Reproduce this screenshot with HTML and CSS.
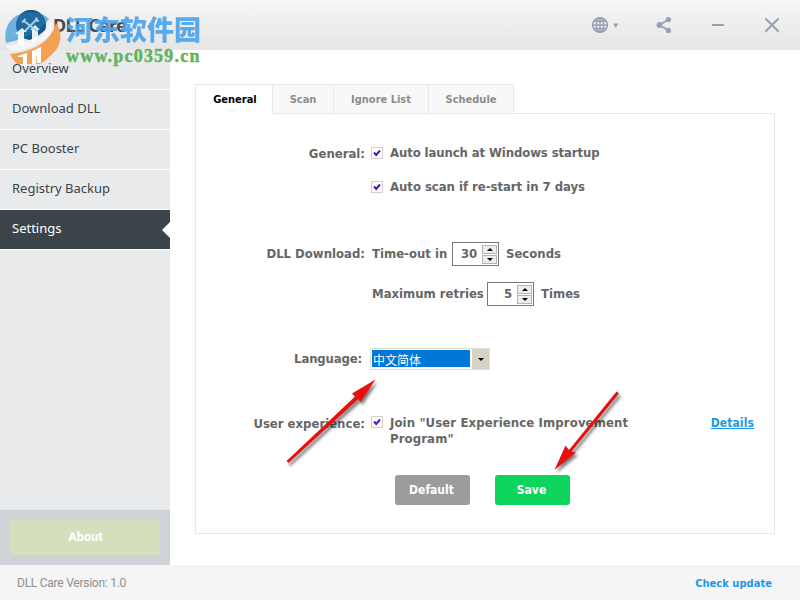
FILE: index.html
```html
<!DOCTYPE html>
<html lang="en">
<head>
  <meta charset="utf-8">
  <title>DLL Care</title>
  <link rel="stylesheet" href="styles.css">
</head>
<body>
  <div class="window">
    <header class="titlebar">
      <svg class="logo" width="30" height="30" viewBox="0 0 30 30">
        <circle cx="15" cy="15" r="15" fill="#1c5580"/>
      </svg>
      <h1 class="app-name">DLL Care</h1>
      <div class="tools">
        <svg class="globe" width="28" height="18" viewBox="0 0 28 18">
          <circle cx="9" cy="9" r="7.3"/>
          <ellipse cx="9" cy="9" rx="3.6" ry="7.3"/>
          <path d="M9 1.5v15M1.5 9h15M3 5.2h12M3 12.8h12"/>
          <path class="solid" d="M22 7.500h5.400l-2.700 4.500z"/>
        </svg>
        <svg class="share" width="16" height="18" viewBox="0 0 16 18">
          <path d="M12.500 3.500L3.500 9l9 5.500"/>
          <circle class="solid" cx="12.400" cy="3.600" r="2.600"/>
          <circle class="solid" cx="3.400" cy="9" r="2.900"/>
          <circle class="solid" cx="12.400" cy="14.400" r="2.600"/>
        </svg>
        <svg class="minimize" width="12" height="18" viewBox="0 0 12 18"><path d="M0 9h12"/></svg>
        <svg class="close" width="16" height="18" viewBox="0 0 16 18"><path d="M1.500 2.500l13 13M14.500 2.500l-13 13"/></svg>
      </div>
    </header>

    <div class="body">
      <aside class="sidebar">
        <nav class="nav">
          <a class="nav-item"><span>Overview</span></a>
          <a class="nav-item">Download DLL</a>
          <a class="nav-item">PC Booster</a>
          <a class="nav-item">Registry Backup</a>
          <a class="nav-item active">Settings</a>
        </nav>
        <div class="about"><button class="about-btn">About</button></div>
      </aside>

      <main class="content">
        <div class="tabs">
          <a class="tab active">General</a>
          <a class="tab">Scan</a>
          <a class="tab ignore">Ignore List</a>
          <a class="tab schedule">Schedule</a>
        </div>
        <form class="panel">
          <div class="row launch">
            <span class="label">General:</span>
            <svg class="check" width="12" height="12" viewBox="0 0 12 12"><rect x=".5" y=".5" width="11" height="11"/><path d="M3 5.500l2.200 2.500L9 3.500"/></svg>
            <span class="check-text">Auto launch at Windows startup</span>
          </div>
          <div class="row rescan">
            <span class="label"></span>
            <svg class="check" width="12" height="12" viewBox="0 0 12 12"><rect x=".5" y=".5" width="11" height="11"/><path d="M3 5.500l2.200 2.500L9 3.500"/></svg>
            <span class="check-text">Auto scan if re-start in 7 days</span>
          </div>
          <div class="row timeout">
            <span class="label">DLL Download:</span>
            <span class="field-text t1">Time-out in</span>
            <span class="spin"><span class="num">30</span><span class="arrows"><i class="up"></i><i class="down"></i></span></span>
            <span class="unit">Seconds</span>
          </div>
          <div class="row retries">
            <span class="label"></span>
            <span class="field-text t2">Maximum retries</span>
            <span class="spin"><span class="num">5</span><span class="arrows"><i class="up"></i><i class="down"></i></span></span>
            <span class="unit">Times</span>
          </div>
          <div class="row language">
            <span class="label">Language:</span>
            <span class="select"><span class="value">中文简体</span><span class="drop"></span></span>
          </div>
          <div class="row experience">
            <span class="label">User experience:</span>
            <svg class="check" width="12" height="12" viewBox="0 0 12 12"><rect x=".5" y=".5" width="11" height="11"/><path d="M3 5.500l2.200 2.500L9 3.500"/></svg>
            <span class="check-text">Join "User Experience Improvement<br>Program"</span>
            <a class="details">Details</a>
          </div>
          <div class="buttons">
            <button type="button" class="btn">Default</button>
            <button type="button" class="btn save">Save</button>
          </div>
        </form>
      </main>
    </div>

    <footer class="footer">
      <span class="version">DLL Care Version: 1.0</span>
      <a class="update">Check update</a>
    </footer>

    <!-- site watermark -->
    <div class="watermark">
      <svg class="mark" width="66" height="70" viewBox="0 0 66 70">
        <path d="M6 43C2 24 15 12 31 12c8 0 14 3 18 7-7 10-22 20-43 24z" fill="#3c9bd8" opacity=".72"/>
        <circle cx="31" cy="25" r="15" fill="#16598c" opacity=".6"/>
        <path d="M5 45.500C24 45 44 36 51 22l3 2c-1 13-18 25-42 27.500z" fill="#f4f6f8" opacity=".95"/>
        <path d="M10 54c23-2 41-12 46-31 8 11 5 25-6 33-3 3-6 6-10 8H17c-3-3-5-6-7-10z" fill="#f3a153"/>
        <path d="M15 34l7-6 5 4h-3v12l-6 1V34zM30 30l5-5 5 5h-2v9l-6 3V30z" fill="#fff" opacity=".9"/>
        <path d="M18 56l9-3v13h-4V57h-5zM32 51l9-4v16h-4V53l-1 11h-4z" fill="#fff"/>
        <path d="M24 21l13 10M37 19L26 30" stroke="#9fd0e8" stroke-width="2" stroke-linecap="round"/>
        <path d="M22 22.500l3.500-3.500M36 17.500l0 3 3 .5" fill="none" stroke="#9fd0e8" stroke-width="2"/>
      </svg>
      <div class="mark-text">
        <div class="mark-name">河东软件园</div>
        <div class="mark-url">www.pc0359.cn</div>
      </div>
    </div>

    <!-- arrows pointing at the language box and the save button -->
    <svg class="pointers" width="800" height="600" viewBox="0 0 800 600">
      <path d="M286.500 461L355 396.500L352 393.500L375.500 379.500L360.500 402L358.500 399L288.500 463z"/>
      <path d="M616.500 391.500L569 450L565.500 445.500L554.500 470L576 452.500L571.500 451.500L619 393.500z"/>
    </svg>
  </div>
</body>
</html>
```
FILE: styles.css
```css
body {
  margin: 0;
  background: #fff;
}

.window {
  position: relative;
  display: flex;
  flex-direction: column;
  width: 800px;
  height: 600px;
  overflow: hidden;
  font: bold 13px "DejaVu Sans Condensed", "DejaVu Sans", sans-serif;
  color: #666;
}

/* title bar */
.titlebar {
  display: flex;
  align-items: center;
  box-sizing: border-box;
  height: 50px;
  padding: 0 20px 0 16px;
  background: linear-gradient(#f6f6f6, #e5e5e5);
}

.app-name {
  margin: 0 0 0 7px;
  font: bold 18px "Noto Sans", sans-serif;
  letter-spacing: -0.7px;
  color: #4c4957;
}

.tools {
  display: flex;
  margin-left: auto;
  fill: none;
  stroke: #98a2b7;
  stroke-width: 1.6;
}

.tools .solid {
  fill: #98a2b7;
  stroke: none;
}

.share {
  margin-left: 37px;
  stroke-width: 2;
}

.minimize {
  margin-left: 40px;
  stroke-width: 2;
}

.close {
  margin-left: 40px;
  stroke-width: 2;
}

/* sidebar */
.body {
  display: flex;
  height: 515px;
}

.sidebar {
  display: flex;
  flex-direction: column;
  justify-content: space-between;
  width: 170px;
  background: #e8eaec;
}

.nav-item {
  position: relative;
  display: block;
  box-sizing: border-box;
  height: 40px;
  padding-left: 12px;
  border-bottom: 1px solid #fff;
  font: 13px/36px "Noto Sans", sans-serif;
  color: #3a4449;
}

/* keeps the first label above the watermark */
.nav-item span {
  position: relative;
  z-index: 2;
}

.nav-item.active {
  background: #3a4449;
  color: #fff;
}

.nav-item.active::after {
  content: "";
  position: absolute;
  right: 0;
  top: 12px;
  border: 8px solid transparent;
  border-right-color: #fff;
  border-left: 0;
}

.about {
  padding: 10px;
  background: #cfd3d7;
}

.about-btn {
  display: block;
  width: 150px;
  height: 35px;
  padding: 0 0 2px 1px;
  border: 0;
  background: #d5dfbd;
  font: bold 12.5px "Roboto", sans-serif;
  letter-spacing: 0.2px;
  color: #fff;
}

/* settings */
.content {
  width: 580px;
  padding: 34px 0 0 25px;
}

.tabs {
  display: flex;
}

.tab {
  box-sizing: border-box;
  width: 61px;
  height: 29px;
  border: 1px solid #e8e8e8;
  border-width: 1px 1px 0 0;
  background: #f8f8f8;
  font-size: 11px;
  line-height: 29px;
  text-align: center;
  color: #8c8c8c;
}

.tab.active {
  z-index: 1;
  width: 78px;
  height: 30px;
  margin-bottom: -1px;
  padding-left: 2px;
  border-left-width: 1px;
  background: #fff;
  color: #000;
}

.tab.ignore {
  width: 95px;
}

.tab.schedule {
  width: 85px;
}

.panel {
  box-sizing: border-box;
  width: 580px;
  height: 421px;
  padding-top: 29px;
  border: 1px solid #e8e8e8;
}

.row {
  display: flex;
  align-items: center;
  height: 20px;
}

.label {
  width: 169px;
  margin-right: 6px;
  text-align: right;
  white-space: nowrap;
}

.check {
  fill: #fff;
  stroke: #d0d0d0;
}

.check path {
  fill: none;
  stroke: #5514b4;
  stroke-width: 2;
}

.check-text {
  margin-left: 7px;
  padding-bottom: 2px;
  letter-spacing: -0.1px;
}

.rescan {
  margin-top: 14px;
}

.rescan .check-text {
  letter-spacing: -0.03px;
}

.timeout {
  height: 24px;
  margin-top: 45px;
}

.timeout .label,
.language .label,
.field-text,
.unit,
.num {
  padding-bottom: 2px;
}

.retries {
  height: 24px;
  margin-top: 16px;
}

.field-text {
  margin-left: 1px;
  white-space: nowrap;
}

.t1 {
  width: 80px;
}

.t2 {
  width: 115px;
}

.spin {
  display: flex;
  align-items: center;
  justify-content: flex-end;
  box-sizing: border-box;
  width: 47px;
  height: 24px;
  padding-right: 1px;
  border: 1px solid #777;
}

.num {
  margin-right: 5px;
  letter-spacing: -0.2px;
}

.arrows {
  display: flex;
  flex-direction: column;
  gap: 1px;
}

.arrows i {
  display: flex;
  justify-content: center;
  align-items: center;
  box-sizing: border-box;
  width: 15px;
  height: 9px;
  border: 1px solid #b4b4b4;
  background: #eee;
}

.arrows i::before,
.drop::before {
  content: "";
  border: 3px solid transparent;
  border-top-color: #000;
  border-bottom: 0;
}

.arrows .up::before {
  transform: rotate(180deg);
}

.unit {
  margin-left: 7px;
}

.language {
  height: 22px;
  margin-top: 42px;
}

.language .label {
  width: 166px;
  margin-right: 8px;
  letter-spacing: -0.15px;
}

.select {
  display: flex;
  box-sizing: border-box;
  width: 120px;
  height: 22px;
  border: 1px solid #e4e0d6;
}

.value {
  box-sizing: border-box;
  width: 98px;
  height: 17px;
  margin: 1px 2px 0 1px;
  padding-left: 1px;
  background: #0078d7;
  font: 12px/19px "Noto Sans CJK SC", sans-serif;
  color: #fff;
}

.drop {
  display: flex;
  align-items: center;
  justify-content: center;
  flex: 1;
  background: #d6d3c5;
}

.experience {
  align-items: flex-start;
  height: 34px;
  margin-top: 44px;
  line-height: 16px;
}

.experience .label {
  padding-top: 2px;
}

.experience .check {
  margin-top: 2px;
}

.experience .check-text {
  padding-top: 1px;
  letter-spacing: 0.12px;
}

.details {
  margin-left: auto;
  margin-right: 20px;
  font-size: 12px;
  letter-spacing: 0.1px;
  line-height: 19px;
  color: #1c98e6;
  text-decoration: underline;
}

.buttons {
  display: flex;
  gap: 25px;
  margin: 27px 0 0 199px;
}

.btn {
  width: 75px;
  height: 30px;
  padding: 0 2px 0 0;
  border: 0;
  border-radius: 3px;
  background: #9c9c9c;
  font: inherit;
  font-size: 12px;
  color: #fff;
}

.btn.save {
  background: #0dd45c;
}

/* footer */
.footer {
  display: flex;
  align-items: center;
  justify-content: space-between;
  height: 35px;
  padding: 0 28px 0 17px;
  background: #f5f5f5;
}

.version {
  font: 12px "Roboto", sans-serif;
  letter-spacing: -0.25px;
  color: #8e8e8e;
}

.update {
  padding-top: 1px;
  font-size: 11px;
  letter-spacing: 0.05px;
  color: #1c98e6;
}

/* things lying over the window */
.watermark {
  position: absolute;
  z-index: 1;
  left: 0;
  top: 0;
  display: flex;
}

.mark-text {
  padding-top: 13px;
}

.mark-name {
  font: 900 27px/32px "Noto Sans CJK SC", sans-serif;
  color: #4aa3ec;
  opacity: 0.9;
}

.mark-url {
  font: bold 18px/23px "Liberation Serif", serif;
  letter-spacing: 1.2px;
  color: #5fb35a;
  -webkit-text-stroke: 0.4px #5fb35a;
}

.pointers {
  position: absolute;
  left: 0;
  top: 0;
  fill: #e8100f;
  filter: drop-shadow(2px 3px 1.500px rgba(0, 0, 0, 0.5));
}
```
